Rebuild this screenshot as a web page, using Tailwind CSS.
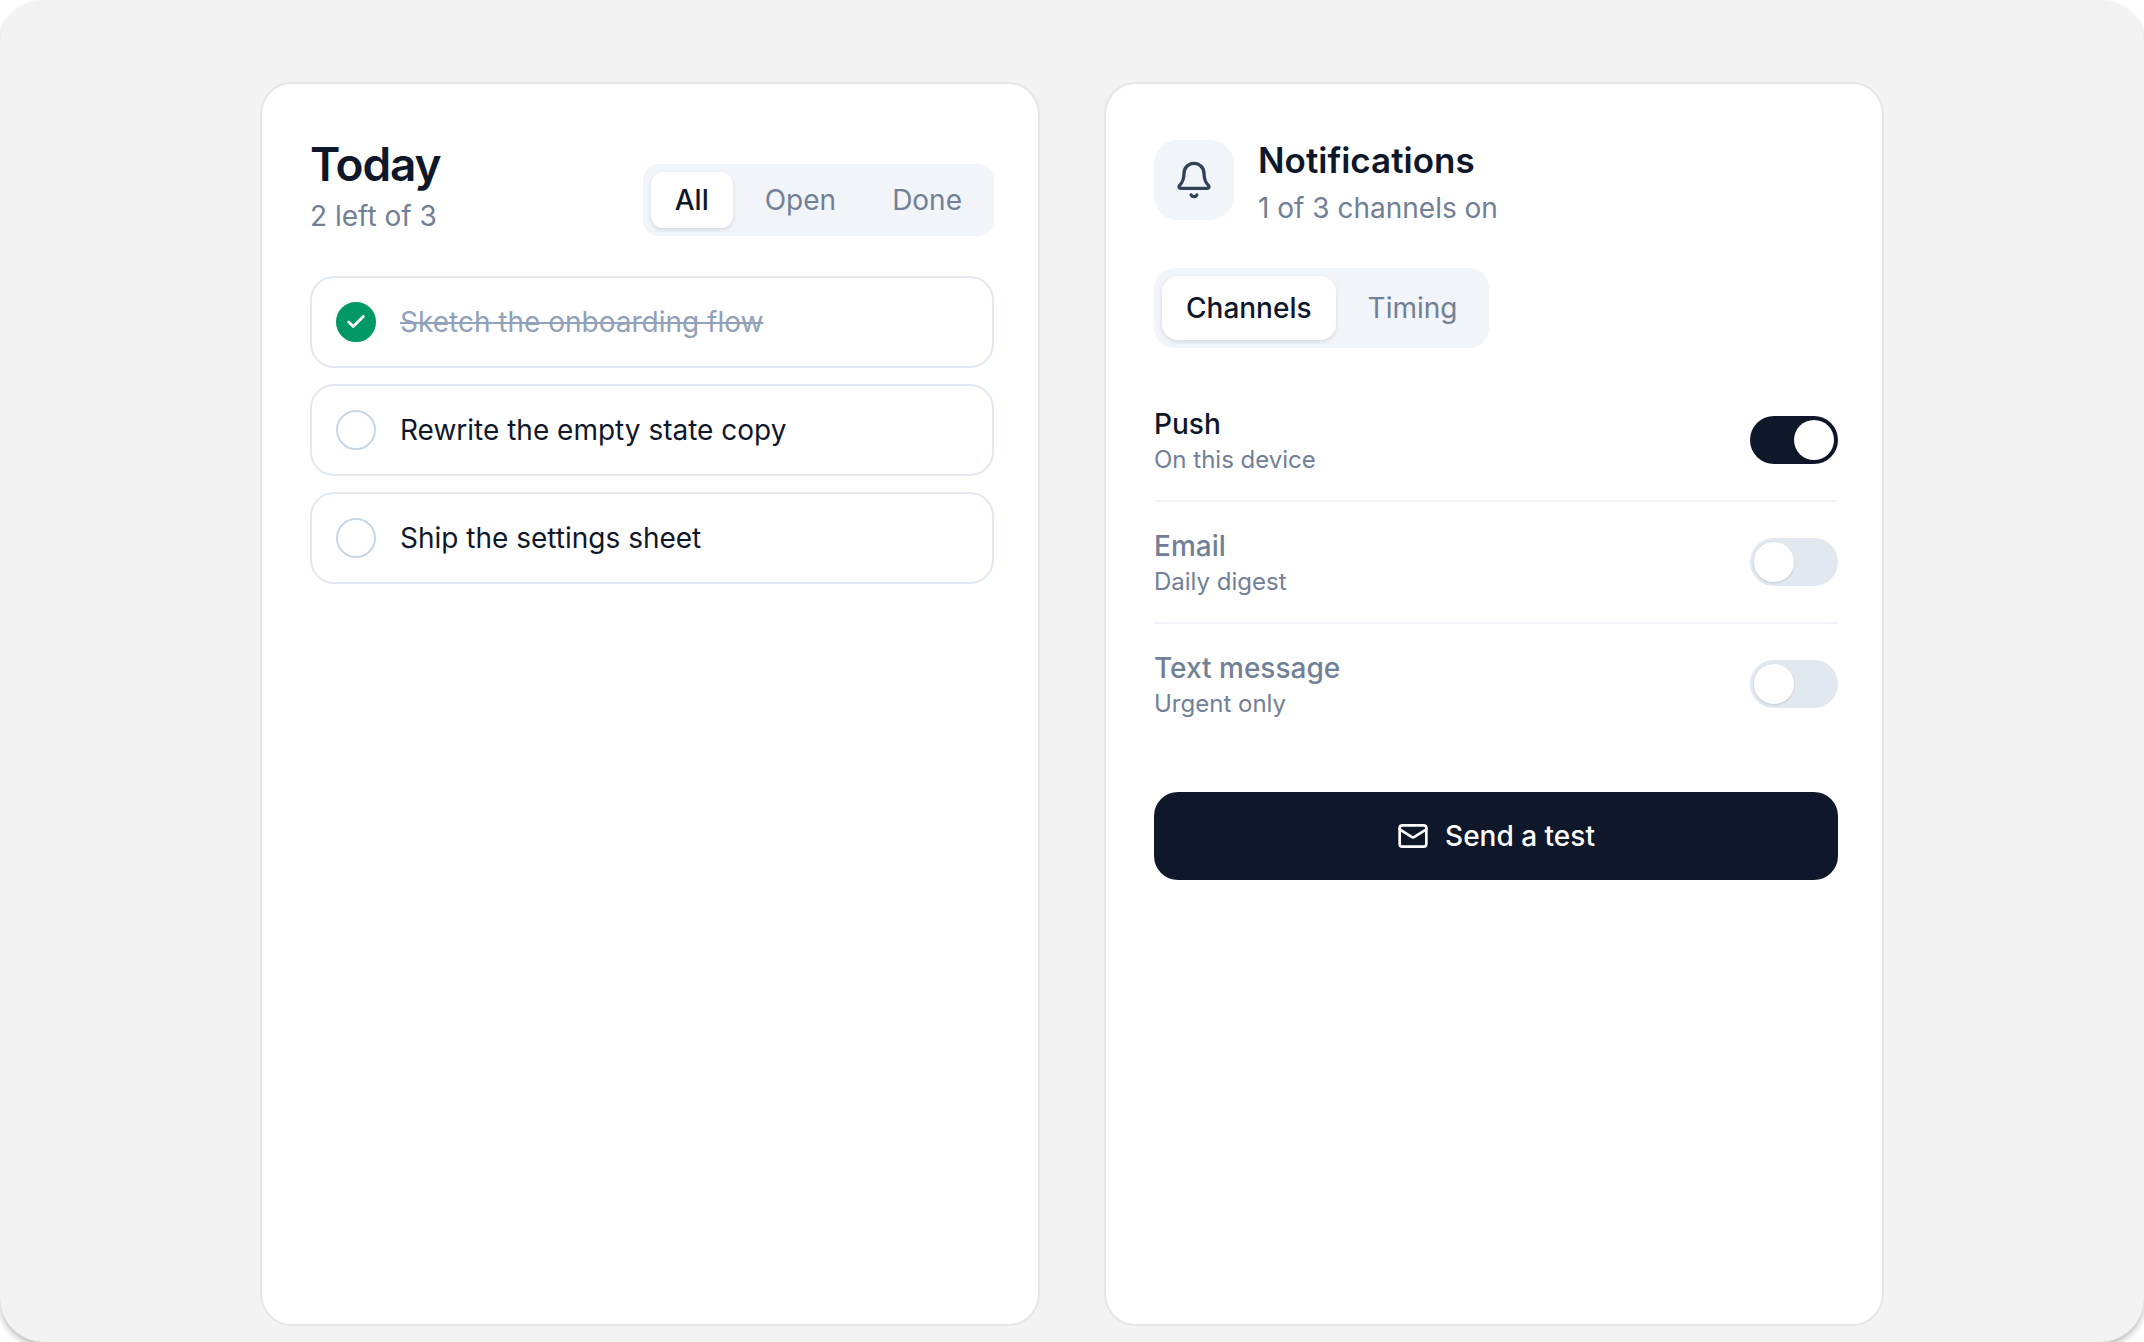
<!DOCTYPE html>
<html lang="en">
<head>
    <meta charset="UTF-8">
    <meta name="viewport" content="width=device-width, initial-scale=1.0">
    <title>Today and Notifications</title>
    <script src="https://cdn.jsdelivr.net/npm/@tailwindcss/browser@4"></script>
</head>
<body class="bg-white font-[Inter,sans-serif] text-[28px] leading-10 text-slate-900 antialiased">
    <div class="min-h-screen flex justify-center gap-16 px-6 pt-[82px] pb-4 bg-[#f3f3f3] rounded-[44px] shadow-[0_4px_6px_rgba(0,0,0,0.25)]">
        <!-- Tasks -->
        <section class="flex-1 max-w-[780px] bg-white border-2 border-[#e6e6e6] rounded-[32px] pt-12 pl-12 pr-11">
            <header class="flex items-end justify-between">
                <div>
                    <h1 class="text-[46px] leading-16 font-semibold tracking-tight">Today</h1>
                    <p class="text-[#718096]"><span id="left">2</span> left of 3</p>
                </div>
                <div class="flex gap-2 p-2 bg-slate-100 rounded-2xl">
                    <button type="button" data-filter="all" class="filter h-14 px-6 rounded-xl text-[#718096] aria-pressed:font-medium aria-pressed:bg-white aria-pressed:text-slate-900 aria-pressed:shadow-[0_2px_4px_rgba(15,23,42,0.12)]" aria-pressed="true">All</button>
                    <button type="button" data-filter="open" class="filter h-14 px-6 rounded-xl text-[#718096] aria-pressed:font-medium aria-pressed:bg-white aria-pressed:text-slate-900 aria-pressed:shadow-[0_2px_4px_rgba(15,23,42,0.12)]" aria-pressed="false">Open</button>
                    <button type="button" data-filter="done" class="filter h-14 px-6 rounded-xl text-[#718096] aria-pressed:font-medium aria-pressed:bg-white aria-pressed:text-slate-900 aria-pressed:shadow-[0_2px_4px_rgba(15,23,42,0.12)]" aria-pressed="false">Done</button>
                </div>
            </header>
            <ul class="mt-10 flex flex-col gap-4">
                <li class="task">
                    <label class="flex items-center gap-6 px-6 py-6 border-2 border-slate-200 rounded-3xl cursor-pointer">
                        <span class="relative size-10 shrink-0">
                            <input type="checkbox" checked class="peer block size-10 appearance-none rounded-full border-2 border-slate-300 checked:border-emerald-600 checked:bg-emerald-600">
                            <svg class="absolute inset-0 m-auto size-[22px] text-white hidden peer-checked:block pointer-events-none" viewBox="0 0 24 24" fill="none" stroke="currentColor" stroke-width="3" stroke-linecap="round" stroke-linejoin="round"><path d="M20 6 9 17l-5-5"/></svg>
                        </span>
                        <span class="text-slate-900 in-[label:has(:checked)]:text-slate-400 in-[label:has(:checked)]:line-through">Sketch the onboarding flow</span>
                    </label>
                </li>
                <li class="task">
                    <label class="flex items-center gap-6 px-6 py-6 border-2 border-slate-200 rounded-3xl cursor-pointer">
                        <span class="relative size-10 shrink-0">
                            <input type="checkbox" class="peer block size-10 appearance-none rounded-full border-2 border-slate-300 checked:border-emerald-600 checked:bg-emerald-600">
                            <svg class="absolute inset-0 m-auto size-[22px] text-white hidden peer-checked:block pointer-events-none" viewBox="0 0 24 24" fill="none" stroke="currentColor" stroke-width="3" stroke-linecap="round" stroke-linejoin="round"><path d="M20 6 9 17l-5-5"/></svg>
                        </span>
                        <span class="text-slate-900 in-[label:has(:checked)]:text-slate-400 in-[label:has(:checked)]:line-through">Rewrite the empty state copy</span>
                    </label>
                </li>
                <li class="task">
                    <label class="flex items-center gap-6 px-6 py-6 border-2 border-slate-200 rounded-3xl cursor-pointer">
                        <span class="relative size-10 shrink-0">
                            <input type="checkbox" class="peer block size-10 appearance-none rounded-full border-2 border-slate-300 checked:border-emerald-600 checked:bg-emerald-600">
                            <svg class="absolute inset-0 m-auto size-[22px] text-white hidden peer-checked:block pointer-events-none" viewBox="0 0 24 24" fill="none" stroke="currentColor" stroke-width="3" stroke-linecap="round" stroke-linejoin="round"><path d="M20 6 9 17l-5-5"/></svg>
                        </span>
                        <span class="text-slate-900 in-[label:has(:checked)]:text-slate-400 in-[label:has(:checked)]:line-through">Ship the settings sheet</span>
                    </label>
                </li>
            </ul>
        </section>

        <!-- Notifications -->
        <section class="flex-1 max-w-[780px] bg-white border-2 border-[#e6e6e6] rounded-[32px] pt-12 pl-12 pr-11">
            <header class="flex items-center gap-6">
                <div class="flex items-center justify-center size-20 bg-slate-100 rounded-3xl text-slate-700">
                    <svg class="size-10" viewBox="0 0 24 24" fill="none" stroke="currentColor" stroke-width="2" stroke-linecap="round" stroke-linejoin="round"><path d="M10.268 21a2 2 0 0 0 3.464 0"/><path d="M3.262 15.326A1 1 0 0 0 4 17h16a1 1 0 0 0 .74-1.673C19.41 13.956 18 12.499 18 8A6 6 0 0 0 6 8c0 4.499-1.411 5.956-2.738 7.326"/></svg>
                </div>
                <div>
                    <h2 class="text-[35px] leading-14 font-semibold">Notifications</h2>
                    <p class="text-[#718096]"><span id="on">1</span> of 3 channels on</p>
                </div>
            </header>
            <div class="mt-10 flex w-fit gap-2 p-2 bg-slate-100 rounded-[20px]">
                <button type="button" class="tab h-16 px-6 rounded-2xl text-[#718096] aria-pressed:font-medium aria-pressed:bg-white aria-pressed:text-slate-900 aria-pressed:shadow-[0_2px_4px_rgba(15,23,42,0.12)]" aria-pressed="true">Channels</button>
                <button type="button" class="tab h-16 px-6 rounded-2xl text-[#718096] aria-pressed:font-medium aria-pressed:bg-white aria-pressed:text-slate-900 aria-pressed:shadow-[0_2px_4px_rgba(15,23,42,0.12)]" aria-pressed="false">Timing</button>
            </div>
            <div class="mt-8 divide-y-2 divide-slate-100">
                <label class="flex items-center justify-between py-6 cursor-pointer">
                    <span>
                        <span class="block font-medium text-[#718096] in-[label:has(:checked)]:text-slate-900">Push</span>
                        <span class="block text-2xl leading-8 text-[#718096]">On this device</span>
                    </span>
                    <input type="checkbox" role="switch" checked class="channel h-12 w-22 p-1 appearance-none rounded-full bg-slate-200 before:block before:size-10 before:rounded-full before:bg-white before:shadow-sm checked:bg-slate-900 checked:before:translate-x-10">
                </label>
                <label class="flex items-center justify-between py-6 cursor-pointer">
                    <span>
                        <span class="block font-medium text-[#718096] in-[label:has(:checked)]:text-slate-900">Email</span>
                        <span class="block text-2xl leading-8 text-[#718096]">Daily digest</span>
                    </span>
                    <input type="checkbox" role="switch" class="channel h-12 w-22 p-1 appearance-none rounded-full bg-slate-200 before:block before:size-10 before:rounded-full before:bg-white before:shadow-sm checked:bg-slate-900 checked:before:translate-x-10">
                </label>
                <label class="flex items-center justify-between py-6 cursor-pointer">
                    <span>
                        <span class="block font-medium text-[#718096] in-[label:has(:checked)]:text-slate-900">Text message</span>
                        <span class="block text-2xl leading-8 text-[#718096]">Urgent only</span>
                    </span>
                    <input type="checkbox" role="switch" class="channel h-12 w-22 p-1 appearance-none rounded-full bg-slate-200 before:block before:size-10 before:rounded-full before:bg-white before:shadow-sm checked:bg-slate-900 checked:before:translate-x-10">
                </label>
            </div>
            <button type="button" class="mt-12 flex w-full h-22 items-center justify-center gap-4 rounded-3xl bg-slate-900 font-medium text-white">
                <svg class="size-8" viewBox="0 0 24 24" fill="none" stroke="currentColor" stroke-width="2" stroke-linecap="round" stroke-linejoin="round"><path d="m22 7-8.991 5.727a2 2 0 0 1-2.009 0L2 7"/><rect x="2" y="4" width="20" height="16" rx="2"/></svg>
                Send a test
            </button>
        </section>
    </div>

    <script>
        const tasks = document.querySelectorAll('.task');
        const channels = document.querySelectorAll('.channel');
        const filters = document.querySelectorAll('.filter');
        const tabs = document.querySelectorAll('.tab');
        let filter = 'all';

        function press(group, btn) {
            group.forEach(b => b.setAttribute('aria-pressed', b === btn));
        }

        function updateTasks() {
            let left = 0;
            tasks.forEach(task => {
                const done = task.querySelector('input').checked;
                if (!done) left++;
                task.hidden = (filter === 'open' && done) || (filter === 'done' && !done);
            });
            document.getElementById('left').textContent = left;
        }

        filters.forEach(btn => {
            btn.addEventListener('click', () => {
                filter = btn.dataset.filter;
                press(filters, btn);
                updateTasks();
            });
        });

        tabs.forEach(btn => btn.addEventListener('click', () => press(tabs, btn)));
        tasks.forEach(task => task.addEventListener('change', updateTasks));

        channels.forEach(input => {
            input.addEventListener('change', () => {
                document.getElementById('on').textContent = document.querySelectorAll('.channel:checked').length;
            });
        });
    </script>
</body>
</html>
